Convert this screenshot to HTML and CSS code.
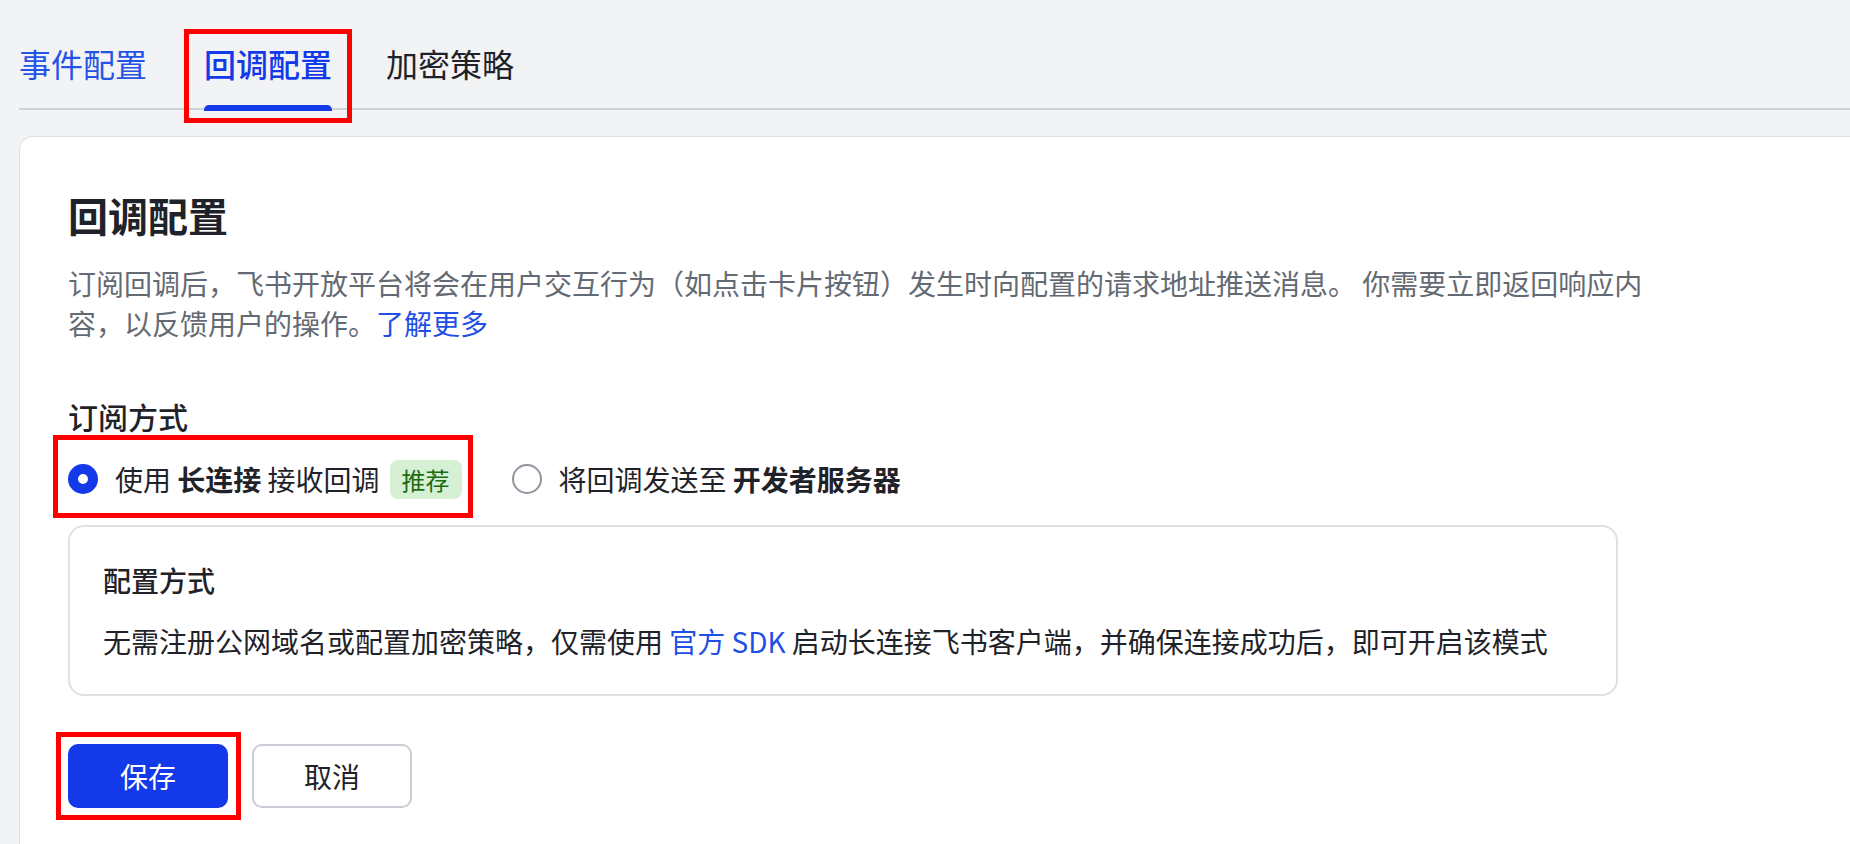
FILE: index.html
```html
<!DOCTYPE html>
<html lang="zh-CN">
<head>
<meta charset="utf-8">
<title>回调配置</title>
<link rel="stylesheet" href="styles.css">
</head>
<body>
<div class="page">
  <nav class="tabs">
    <div class="tab tab-link">事件配置</div>
    <div class="tab tab-active">回调配置<span class="mark mark-tab"></span></div>
    <div class="tab">加密策略</div>
  </nav>

  <section class="card">
    <h1 class="title">回调配置</h1>
    <p class="desc">订阅回调后，飞书开放平台将会在用户交互行为（如点击卡片按钮）发生时向配置的请求地址推送消息。 你需要立即返回响应内容，以反馈用户的操作。<a class="link">了解更多</a></p>

    <h2 class="subtitle">订阅方式</h2>
    <div class="options">
      <label class="option">
        <span class="radio radio-on"></span>
        <span class="option-text">使用 <b>长连接</b> 接收回调</span>
        <span class="tag">推荐</span>
        <span class="mark mark-option"></span>
      </label>
      <label class="option">
        <span class="radio"></span>
        <span class="option-text">将回调发送至 <b>开发者服务器</b></span>
      </label>
    </div>

    <div class="infobox">
      <div class="infobox-title">配置方式</div>
      <div class="infobox-text">无需注册公网域名或配置加密策略，仅需使用 <a class="link">官方 SDK</a> 启动长连接飞书客户端，并确保连接成功后，即可开启该模式</div>
    </div>

    <div class="actions">
      <button class="btn btn-primary">保存<span class="mark mark-btn"></span></button>
      <button class="btn btn-default">取消</button>
    </div>
  </section>
</div>
</body>
</html>
```

FILE: styles.css
```css
html, body {
  margin: 0;
  padding: 0;
}
body {
  background: #f2f3f5;
  font-family: "Noto Sans CJK SC", "Noto Sans", sans-serif;
  color: #1f2329;
  overflow: hidden;
  height: 844px;
}
.page {
  padding-left: 19px;
}
.tabs {
  display: flex;
  height: 108px;
  border-bottom: 2px solid #d0d3d6;
}
.tab {
  position: relative;
  padding-top: 41px;
  font-size: 32px;
  line-height: 44px;
  height: 67px;
  color: #1f2329;
  white-space: nowrap;
}
.tab-link {
  color: #2553e6;
  margin-right: 57px;
}
.tab-active {
  color: #1439e8;
  font-weight: 500;
  margin-right: 54px;
}
.tab-active::after {
  content: "";
  position: absolute;
  left: 0;
  right: 0;
  bottom: -3px;
  height: 6px;
  background: #1439e8;
  border-radius: 5px 5px 0 0;
}
.mark {
  position: absolute;
  border: 5px solid #ff0000;
  pointer-events: none;
}
.mark-tab {
  top: 29px;
  bottom: -15px;
  left: -20px;
  right: -20px;
}
.card {
  margin-top: 26px;
  width: 1900px;
  height: 708px;
  background: #fff;
  border: 1px solid #dee0e3;
  border-bottom: none;
  border-radius: 14px 14px 0 0;
  padding: 51px 0 0 48px;
  box-sizing: border-box;
  overflow: hidden;
}
.title {
  margin: 0;
  font-size: 40px;
  line-height: 54px;
  font-weight: 600;
  color: #1f2329;
}
.desc {
  margin: 21px 0 0;
  width: 1592px;
  font-size: 28px;
  line-height: 40px;
  color: #646a73;
}
.link {
  color: #1f4fe6;
  text-decoration: none;
}
.subtitle {
  margin: 53px 0 0;
  font-size: 30px;
  line-height: 40px;
  font-weight: 500;
  color: #1f2329;
}
.options {
  display: flex;
  align-items: center;
  gap: 50px;
  margin-top: 19px;
  height: 48px;
}
.option {
  position: relative;
  display: flex;
  align-items: center;
  font-size: 28px;
  line-height: 40px;
  color: #1f2329;
  white-space: nowrap;
}
.option b {
  font-weight: 700;
}
.radio {
  width: 30px;
  height: 30px;
  box-sizing: border-box;
  border: 2px solid #8f959e;
  border-radius: 50%;
  margin-right: 17px;
  flex: none;
}
.radio-on {
  border: 10px solid #1439e8;
}
.tag {
  margin-left: 10px;
  padding: 0 12px;
  height: 39px;
  line-height: 39px;
  font-size: 24px;
  color: #1d6a14;
  background: #d5f0d3;
  border-radius: 8px;
}
.mark-option {
  top: -24px;
  bottom: -19px;
  left: -15px;
  right: -11px;
}
.infobox {
  margin-top: 22px;
  width: 1550px;
  box-sizing: border-box;
  border: 2px solid #dee0e3;
  border-radius: 16px;
  padding: 34px 0 33px 33px;
}
.infobox-title {
  font-size: 28px;
  line-height: 38px;
  font-weight: 500;
  color: #1f2329;
}
.infobox-text {
  margin-top: 22px;
  font-size: 28px;
  line-height: 40px;
  color: #1f2329;
}
.actions {
  display: flex;
  gap: 24px;
  margin-top: 48px;
}
.btn {
  position: relative;
  width: 160px;
  height: 64px;
  box-sizing: border-box;
  border-radius: 10px;
  font-family: inherit;
  font-size: 28px;
  line-height: 40px;
  padding: 0;
  cursor: pointer;
}
.btn-primary {
  background: #1439e8;
  border: none;
  color: #fff;
}
.btn-default {
  background: #fff;
  border: 2px solid #c9cdd4;
  color: #1f2329;
}
.mark-btn {
  top: -12px;
  bottom: -12px;
  left: -12px;
  right: -13px;
}
```
